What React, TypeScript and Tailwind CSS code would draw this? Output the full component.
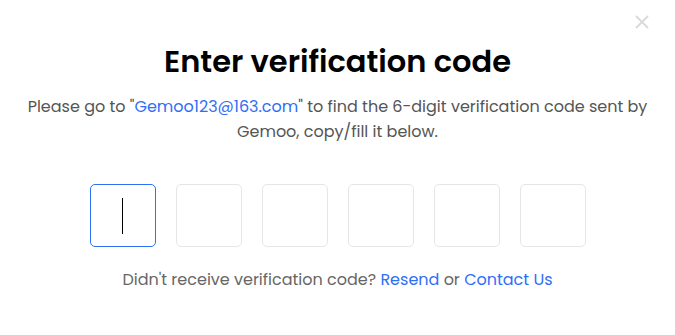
import React from "react";

export default function App() {
  const boxes = [0, 1, 2, 3, 4, 5];
  return (
    <div
      className="w-[675px] h-[335px] bg-white relative flex flex-col items-center"
      style={{ fontFamily: "Poppins, 'Noto Sans', sans-serif" }}
    >
      <button className="absolute right-[26px] top-[15px] w-[14px] h-[14px] text-[#d9d9d9]">
        <svg viewBox="0 0 14 14" width="14" height="14" fill="none" stroke="currentColor" strokeWidth="1.8">
          <path d="M1 1L13 13M13 1L1 13" />
        </svg>
      </button>
      <h1 className="mt-[42px] text-[30.5px] leading-[40px] font-semibold text-black">Enter verification code</h1>
      <p className="mt-[12px] w-[650px] text-center text-[16px] leading-[25px] text-[#555555]">
        Please go to "<span className="text-[#2f6ef6]">Gemoo123@163.com</span>" to find the 6-digit verification code sent by Gemoo, copy/fill it below.
      </p>
      <div className="mt-[40px] flex gap-[20px]">
        {boxes.map((i) => (
          <div
            key={i}
            className={
              i === 0
                ? "w-[66px] h-[63px] rounded-[5px] border border-[#2f6ef6] flex items-center justify-center"
                : "w-[66px] h-[63px] rounded-[5px] border border-[#e6e6e6]"
            }
          >
            {i === 0 && <div className="w-[1px] h-[36px] bg-black" />}
          </div>
        ))}
      </div>
      <p className="mt-[20px] text-[16px] leading-[25px] text-[#666666]">
        Didn't receive verification code? <span className="text-[#2f6ef6]">Resend</span> or{" "}
        <span className="text-[#2f6ef6]">Contact Us</span>
      </p>
    </div>
  );
}
